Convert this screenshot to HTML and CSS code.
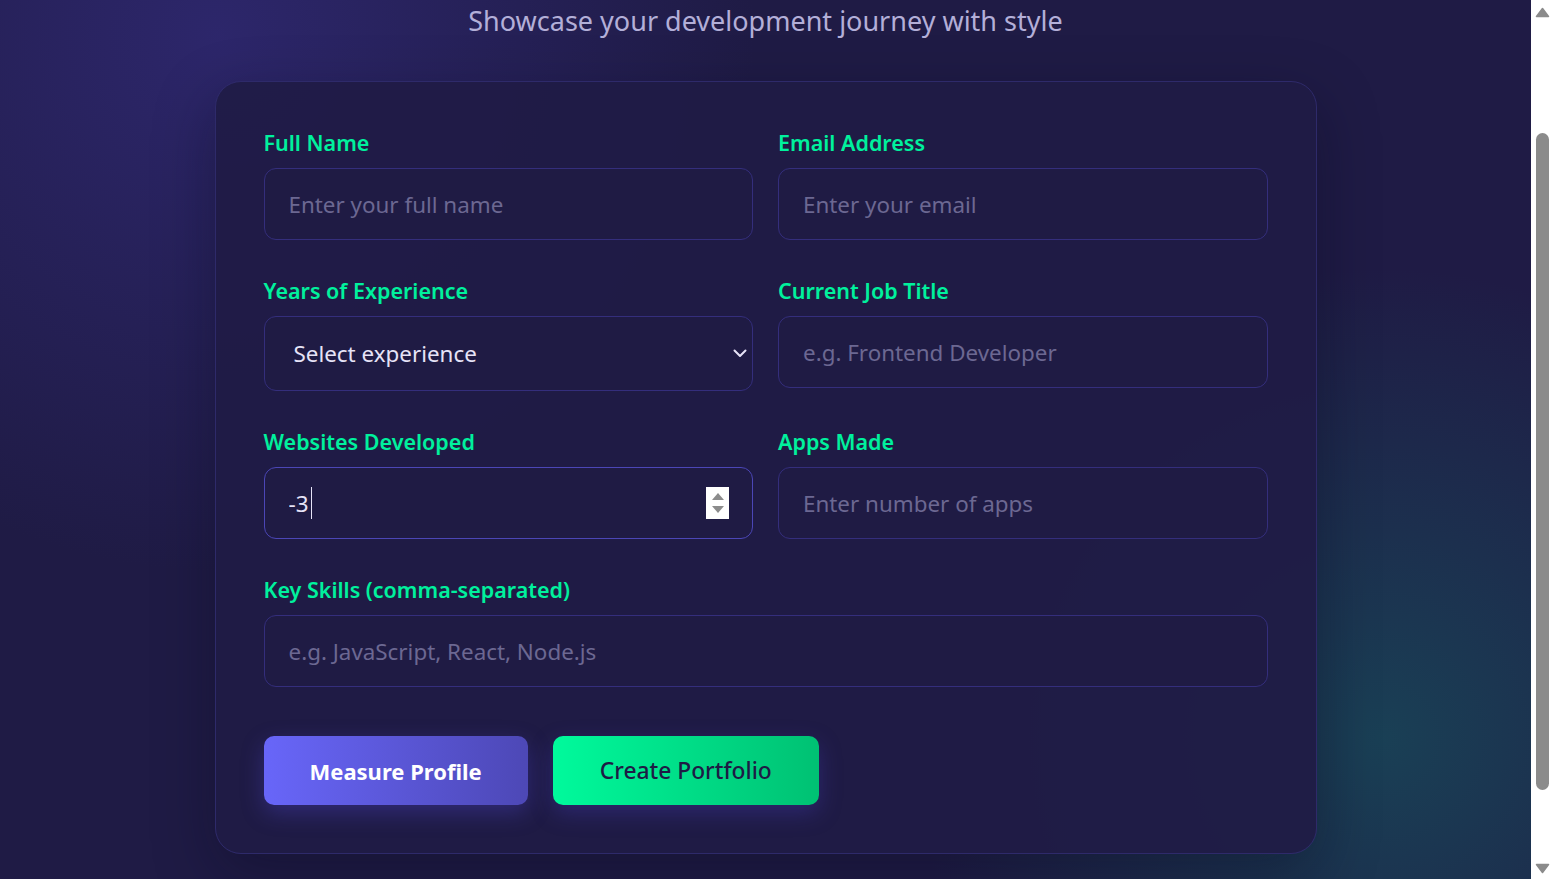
FILE: index.html
```html
<!DOCTYPE html>
<html lang="en">
<head>
<meta charset="utf-8">
<title>Developer Portfolio</title>
<link rel="stylesheet" href="styles.css">
</head>
<body>
<div class="page">
  <header class="hero">
    <h1 class="title">Developer Portfolio</h1>
    <p class="subtitle">Showcase your development journey with style</p>
  </header>
  <form class="card" onsubmit="return false">
    <div class="grid">
      <div class="field">
        <label class="label" for="name">Full Name</label>
        <input class="control" id="name" type="text" placeholder="Enter your full name">
      </div>
      <div class="field">
        <label class="label" for="email">Email Address</label>
        <input class="control" id="email" type="email" placeholder="Enter your email">
      </div>
      <div class="field">
        <label class="label" for="exp">Years of Experience</label>
        <div class="select-wrap">
          <select class="control select" id="exp">
            <option>Select experience</option>
            <option>0-1 years</option>
            <option>1-3 years</option>
            <option>3-5 years</option>
            <option>5+ years</option>
          </select>
          <svg class="chevron" width="14" height="9" viewBox="0 0 14 9"><path d="M1.5 1.5 L7 7 L12.5 1.5" fill="none" stroke="#e6e3f7" stroke-width="2" stroke-linecap="round" stroke-linejoin="round"/></svg>
        </div>
      </div>
      <div class="field">
        <label class="label" for="job">Current Job Title</label>
        <input class="control" id="job" type="text" placeholder="e.g. Frontend Developer">
      </div>
      <div class="field">
        <label class="label" for="sites">Websites Developed</label>
        <div class="number-wrap">
          <input class="control value is-focused" id="sites" type="text" inputmode="numeric" value="-3">
          <span class="caret"></span>
          <span class="spinner"><span class="spin-up"></span><span class="spin-down"></span></span>
        </div>
      </div>
      <div class="field">
        <label class="label" for="apps">Apps Made</label>
        <input class="control" id="apps" type="text" placeholder="Enter number of apps">
      </div>
      <div class="field full">
        <label class="label" for="skills">Key Skills (comma-separated)</label>
        <input class="control" id="skills" type="text" placeholder="e.g. JavaScript, React, Node.js">
      </div>
    </div>
    <div class="actions">
      <button class="btn btn-primary" type="button">Measure Profile</button>
      <button class="btn btn-accent" type="button">Create Portfolio</button>
    </div>
  </form>
</div>
<div class="fake-scrollbar" aria-hidden="true">
  <div class="sb-button">
    <svg width="15" height="11" viewBox="0 0 15 11"><path d="M7.5 1.5 L13.5 9.5 L1.5 9.5 Z" fill="#8b8b8b" stroke="#8b8b8b" stroke-width="1.5" stroke-linejoin="round"/></svg>
  </div>
  <div class="sb-track"><div class="sb-thumb"></div></div>
  <div class="sb-button sb-bottom">
    <svg width="15" height="11" viewBox="0 0 15 11"><path d="M1.5 1.5 L13.5 1.5 L7.5 9.5 Z" fill="#8b8b8b" stroke="#8b8b8b" stroke-width="1.5" stroke-linejoin="round"/></svg>
  </div>
</div>
<script src="script.js"></script>
</body>
</html>
```
FILE: styles.css
```css
* { box-sizing: border-box; }

html {
  background:
    radial-gradient(circle at 14% 4%, rgba(54, 46, 132, 0.6), rgba(54, 46, 132, 0) 34%),
    radial-gradient(circle at 89% 84%, rgba(22, 88, 96, 0.6), rgba(22, 88, 96, 0) 30%),
    #1f1b45;
  background-attachment: fixed;
}

body {
  margin: 0 23px 0 0;
  font-family: "Noto Sans", "Open Sans", sans-serif;
  color: #e6e3f7;
}

.page {
  padding: 40px 24px 116px;
}

.hero {
  text-align: center;
  margin-bottom: 40px;
}

.title {
  margin: 0 0 40px;
  font-size: 56px;
  line-height: 72px;
  font-weight: 700;
  color: #00f5a0;
}

.subtitle {
  margin: 0;
  font-size: 27px;
  line-height: 40px;
  font-weight: 400;
  color: #b3afd8;
}

.card {
  max-width: 1102px;
  margin: 0 auto;
  padding: 48px;
  border: 1px solid #2e2a6a;
  border-radius: 26px;
  background: rgba(31, 27, 69, 0.92);
  box-shadow: 0 20px 60px rgba(10, 8, 30, 0.35);
}

.grid {
  display: grid;
  grid-template-columns: 1fr 1fr;
  column-gap: 25px;
  row-gap: 38px;
  align-items: start;
}

.field { display: flex; flex-direction: column; }
.field.full { grid-column: 1 / -1; }

.label {
  display: block;
  margin-bottom: 12px;
  font-size: 21.5px;
  line-height: 26px;
  font-weight: 600;
  color: #00f19d;
}

.control {
  width: 100%;
  height: 72px;
  padding: 0 24px;
  border: 1px solid #342e7c;
  border-radius: 12px;
  background: #1f1b44;
  color: #e6e3f7;
  font-family: inherit;
  font-size: 22.4px;
  outline: none;
}
.control::placeholder { color: #6c6892; }

.select-wrap, .number-wrap { position: relative; }

.select {
  height: 75px;
  padding-left: 29px;
  -webkit-appearance: none;
  appearance: none;
  color: #e6e3f7;
}

.chevron {
  position: absolute;
  right: 6px;
  top: 33px;
  pointer-events: none;
}

.value.is-focused {
  border-color: #4b46b6;
  caret-color: transparent;
}

.caret {
  position: absolute;
  left: 47px;
  top: 20px;
  width: 1px;
  height: 32px;
  background: #e6e3f7;
  pointer-events: none;
}

.spinner {
  position: absolute;
  right: 24px;
  top: 20px;
  width: 23px;
  height: 32px;
  background: #ffffff;
  display: flex;
  flex-direction: column;
  align-items: center;
  justify-content: center;
  gap: 6px;
  pointer-events: none;
}
.spin-up, .spin-down {
  width: 0;
  height: 0;
  border-left: 6px solid transparent;
  border-right: 6px solid transparent;
}
.spin-up { border-bottom: 7px solid #8c8c8c; }
.spin-down { border-top: 7px solid #8c8c8c; }

.actions {
  display: flex;
  gap: 25px;
  margin-top: 49px;
}

.btn {
  height: 69px;
  padding: 0 48px;
  border: none;
  border-radius: 10px;
  font-family: inherit;
  font-size: 22px;
  cursor: pointer;
}

.btn-primary {
  padding: 0 46px;
  background: linear-gradient(90deg, #6866f9, #4d48b6);
  color: #ffffff;
  font-weight: 700;
  box-shadow: 0 8px 22px rgba(80, 72, 210, 0.35);
}

.btn-accent {
  padding: 0 47px;
  font-size: 22.8px;
  background: linear-gradient(90deg, #00fa9c, #00c173);
  color: #1e1b45;
  font-weight: 500;
  box-shadow: 0 8px 22px rgba(70, 64, 190, 0.35);
}

/* stand-in for the browser's classic scrollbar */
.fake-scrollbar {
  position: fixed;
  top: 0;
  right: 0;
  bottom: 0;
  width: 23px;
  background: #ffffff;
  display: flex;
  flex-direction: column;
  z-index: 10;
}

.sb-button {
  height: 20px;
  flex: none;
  display: flex;
  justify-content: center;
  align-items: flex-start;
  padding-top: 7px;
}
.sb-bottom {
  align-items: flex-end;
  padding-top: 0;
  padding-bottom: 5px;
}

.sb-track {
  flex: 1;
  padding: 113px 5px 0;
}

.sb-thumb {
  width: 13px;
  height: 657px;
  border-radius: 7px;
  background: #8b8b8b;
}
```
FILE: script.js
```js
window.addEventListener('load', function () {
  window.scrollTo(0, 151);
});
```
